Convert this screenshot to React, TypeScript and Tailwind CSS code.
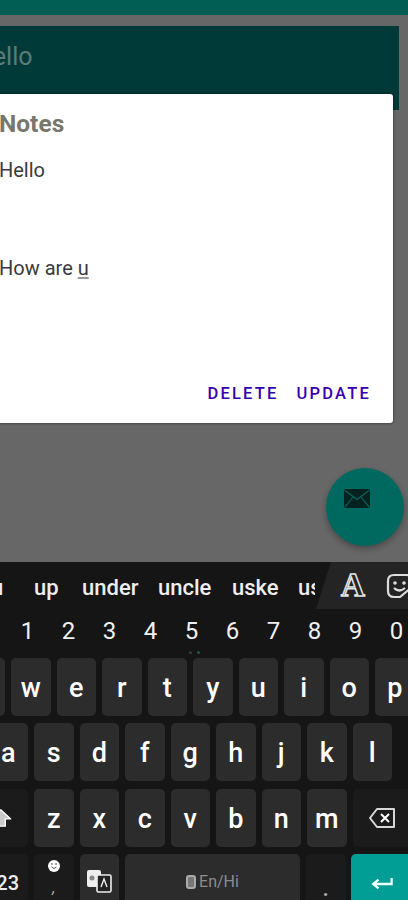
import React from "react";

const font = "font-['Roboto',sans-serif]";
const row1 = ["q", "w", "e", "r", "t", "y", "u", "i", "o", "p"];
const row2 = ["a", "s", "d", "f", "g", "h", "j", "k", "l"];
const row3 = ["z", "x", "c", "v", "b", "n", "m"];
const nums = ["1", "2", "3", "4", "5", "6", "7", "8", "9", "0"];

function Key({ label }: { label: string }) {
  return (
    <div className="flex h-full w-[39.5px] shrink-0 items-center justify-center rounded-[5px] bg-[#2c2c2c] pt-[2px] text-[27px] leading-none font-medium text-white">
      {label}
    </div>
  );
}

function Shift() {
  return (
    <svg width="26" height="26" viewBox="0 0 26 26" fill="#c9c9c9" stroke="#fff" strokeWidth="1.5" strokeLinejoin="round">
      <path d="M13 4 L24 14 H18 V22 H8 V14 H2 Z" />
    </svg>
  );
}

export default function App() {
  return (
    <div className={`relative flex h-[900px] w-[408px] flex-col overflow-hidden bg-[#676767] ${font}`}>
      <div className="flex-1">
        <div className="h-[15px] bg-[#005e55]" />
        <div className="mt-[11px] h-[84px] w-[399px] bg-[#003a38] pt-[13px]">
          <div className="-ml-[25px] text-[25px] leading-[36px] text-[#5d7a78]">Hello</div>
        </div>
      </div>

      <div className="absolute top-[94px] -left-[30px] flex h-[329px] w-[423px] flex-col rounded-[3px] bg-white pl-[30px] shadow-[0_0_3px_rgba(0,0,0,0.6)]">
        <div className="-ml-[1px] mt-[15px] text-[24.5px] leading-[30px] font-bold text-[#77776b]">Notes</div>
        <div className="-ml-[1px] mt-[18px] text-[20px] leading-[26px] text-[#3a3a3a]">Hello</div>
        <div className="-ml-[1px] mt-[72px] text-[20px] leading-[26px] text-[#3a3a3a]">
          How are <span className="underline decoration-[#999] underline-offset-2">u</span>
        </div>
        <div className="mt-[103px] flex justify-end gap-[18px] pr-[22px] text-[16.5px] leading-[20px] font-medium tracking-[2.2px] text-[#3700b3]">
          <span>DELETE</span>
          <span>UPDATE</span>
        </div>
      </div>

      <div className="absolute top-[468px] left-[326px] flex h-[78px] w-[78px] items-start justify-start rounded-full bg-[#00695f] pt-[21px] pl-[18px] shadow-[0_3px_6px_rgba(0,0,0,0.3)]">
        <svg width="26" height="20" viewBox="0 0 26 20">
          <rect width="26" height="19" rx="2" fill="#02211f" />
          <path d="M1 1.5 L13 10.5 L25 1.5 M1 18 L9 8 M25 18 L17 8" fill="none" stroke="#00695f" strokeWidth="1.2" />
        </svg>
      </div>

      <div className="flex h-[338px] shrink-0 flex-col overflow-hidden bg-[#151515] text-white">
        <div className="relative flex h-[48px] shrink-0 items-center pt-[3px] text-[22px] font-medium text-[#eeeeee]">
          <span className="absolute left-[-9px]">u</span>
          <span className="absolute left-[34px]">up</span>
          <span className="absolute left-[82px]">under</span>
          <span className="absolute left-[158px]">uncle</span>
          <span className="absolute left-[232px]">uske</span>
          <span className="absolute left-[298px] w-[17px] overflow-hidden">uske</span>
          <div className="absolute top-0 right-0 flex h-[47px] w-[92px] items-center bg-[#242424] [clip-path:polygon(15px_0,100%_0,100%_100%,0_100%)]">
            <span className="ml-[25px] font-['Liberation_Serif',serif] text-[33px] leading-none font-bold text-[#242424] [-webkit-text-stroke:1.5px_#e4e4e4]">A</span>
            <svg className="ml-[21px] shrink-0" width="26" height="26" viewBox="0 0 26 26" fill="none" stroke="#dcdcdc" strokeWidth="2.2">
              <path d="M8 2 H20 Q26 2 26 8 V14 L14 24 H8 Q2 24 2 18 V8 Q2 2 8 2 Z" />
              <circle cx="9" cy="10" r="1.8" fill="#dcdcdc" stroke="none" />
              <circle cx="18" cy="10" r="1.8" fill="#dcdcdc" stroke="none" />
              <path d="M8 15 Q13 20 19 15" />
            </svg>
          </div>
        </div>

        <div className="mt-[7px] h-[29px] shrink-0">
          <div className="ml-[7px] flex">
            {nums.map((n) => (
              <span key={n} className="w-[41px] shrink-0 text-center text-[24px] leading-[29px] text-[#f0f0f0]">
                {n}
              </span>
            ))}
          </div>
        </div>
        <div className="mt-[5px] ml-[189px] flex h-[3px] shrink-0 gap-[5px]">
          <span className="h-[3px] w-[3px] rounded-full bg-[#2c3f3b]" />
          <span className="h-[3px] w-[3px] rounded-full bg-[#1f5a50]" />
        </div>

        <div className="mt-[4px] -ml-[34.5px] flex h-[58px] shrink-0 gap-[6px]">
          {row1.map((k) => (
            <Key key={k} label={k} />
          ))}
        </div>
        <div className="mt-[7px] -ml-[11.5px] flex h-[58px] shrink-0 gap-[6px]">
          {row2.map((k) => (
            <Key key={k} label={k} />
          ))}
        </div>
        <div className="mt-[8px] -ml-[11.5px] flex h-[58px] shrink-0 gap-[6px]">
          <div className="flex w-[39.5px] shrink-0 items-center justify-center rounded-[5px] bg-[#1b1b1b] pr-[16px]">
            <Shift />
          </div>
          {row3.map((k) => (
            <Key key={k} label={k} />
          ))}
          <div className="flex w-[58px] shrink-0 items-center justify-center rounded-[5px] bg-[#1b1b1b]">
            <svg width="28" height="22" viewBox="0 0 28 22" fill="none" stroke="#d8d8d8" strokeWidth="2">
              <path d="M9 2 H26 V20 H9 L2 11 Z" strokeLinejoin="round" />
              <path d="M13 7 L21 15 M21 7 L13 15" stroke="#fff" />
            </svg>
          </div>
        </div>
        <div className="mt-[7px] -ml-[11.5px] flex h-[58px] shrink-0 gap-[6px]">
          <div className="flex w-[39.5px] shrink-0 justify-end rounded-[5px] bg-[#1b1b1b] pt-[17px] pr-[9px] text-[20px] leading-[24px] font-medium text-[#eeeeee]">
            23
          </div>
          <div className="flex w-[39.5px] shrink-0 flex-col items-center rounded-[5px] bg-[#1b1b1b] pt-[6px]">
            <span className="flex h-[12px] w-[12px] items-center justify-center rounded-full bg-white">
              <svg width="8" height="8" viewBox="0 0 8 8" fill="none" stroke="#555" strokeWidth="1">
                <path d="M2 1 V3 M6 1 V3 M1.5 5 Q4 8 6.5 5" />
              </svg>
            </span>
            <span className="mt-[8px] text-[16px] leading-[16px] text-[#aaaaaa] italic">,</span>
          </div>
          <div className="flex w-[39.5px] shrink-0 items-start justify-center rounded-[5px] bg-[#2c2c2c] pt-[15px]">
            <svg width="26" height="24" viewBox="0 0 26 24">
              <rect x="1" y="1" width="14" height="17" rx="2" fill="#eeeeee" />
              <rect x="11" y="6" width="14" height="17" rx="1.5" fill="#222" stroke="#eeeeee" strokeWidth="1.6" />
              <path d="M15 18 L18 10 L21 18" fill="none" stroke="#eee" strokeWidth="1.4" />
              <circle cx="6" cy="9" r="2.5" fill="#888" />
            </svg>
          </div>
          <div className="flex w-[175px] shrink-0 items-start justify-center gap-[3px] rounded-[5px] bg-[#2c2c2c] pt-[18px] text-[16px] leading-[20px] text-[#8c8c8c]">
            <span className="mt-[3px] h-[14px] w-[10px] rounded-[3px] border-2 border-[#aaaaaa] bg-[#777]" />
            <span>En/Hi</span>
          </div>
          <div className="flex w-[39.5px] shrink-0 justify-center rounded-[5px] bg-[#1b1b1b] pt-[23px] text-[20px] leading-[24px] font-bold text-[#aaaaaa]">
            .
          </div>
          <div className="-ml-[1px] flex w-[63px] shrink-0 items-start justify-start rounded-[5px] bg-[#009e94] pt-[23px] pl-[20px]">
            <svg width="22" height="14" viewBox="0 0 24 16" fill="none" stroke="#f0fffd" strokeWidth="2.6">
              <path d="M23 1 V8 H3 M8 3 L2 8 L8 13" />
            </svg>
          </div>
        </div>
      </div>
    </div>
  );
}
